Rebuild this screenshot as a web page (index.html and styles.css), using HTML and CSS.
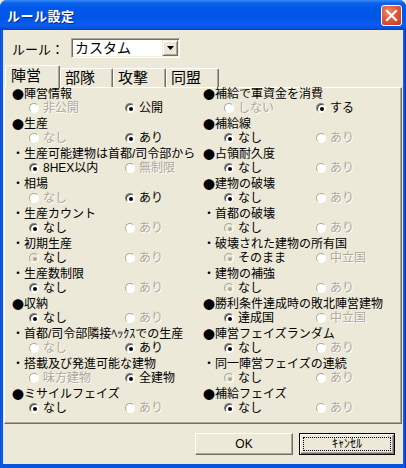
FILE: index.html
```html
<!DOCTYPE html>
<html lang="ja">
<head>
  <meta charset="UTF-8" />
  <title>ルール設定</title>
  <link rel="stylesheet" href="styles.css">
</head>
<body>
  <div class="window">
    <div class="titlebar">
      <span class="title">ルール設定</span>
      <span class="close">
        <svg width="13" height="13" viewBox="0 0 13 13"><path d="M2 2 L11 11 M11 2 L2 11" stroke="#fff" stroke-width="2.2" stroke-linecap="square"/></svg>
      </span>
    </div>

    <div class="client">
      <div class="rule-row">
        <span class="rule-label">ルール：</span>
        <div class="combo">
          <span class="combo-text">カスタム</span>
          <span class="combo-btn"><svg width="7" height="4" viewBox="0 0 7 4"><path d="M0 0 H7 L3.5 4 Z" fill="#000"/></svg></span>
        </div>
      </div>

      <div class="tabs">
        <div class="tab active">陣営</div>
        <div class="tab">部隊</div>
        <div class="tab">攻撃</div>
        <div class="tab">同盟</div>
      </div>

      <div class="panel">
        <div class="col col-left">
          <div class="group">
            <div class="head"><span class="mark">●</span>陣営情報</div>
            <div class="opts">
              <span class="opt off"><i class="rb"></i>非公開</span>
              <span class="opt"><i class="rb on"></i>公開</span>
            </div>
          </div>
          <div class="group">
            <div class="head"><span class="mark">●</span>生産</div>
            <div class="opts">
              <span class="opt off"><i class="rb"></i>なし</span>
              <span class="opt"><i class="rb on"></i>あり</span>
            </div>
          </div>
          <div class="group">
            <div class="head">・生産可能建物は首都/司令部から</div>
            <div class="opts">
              <span class="opt"><i class="rb on"></i>8HEX以内</span>
              <span class="opt off"><i class="rb"></i>無制限</span>
            </div>
          </div>
          <div class="group">
            <div class="head">・相場</div>
            <div class="opts">
              <span class="opt off"><i class="rb"></i>なし</span>
              <span class="opt"><i class="rb on"></i>あり</span>
            </div>
          </div>
          <div class="group">
            <div class="head">・生産カウント</div>
            <div class="opts">
              <span class="opt"><i class="rb on"></i>なし</span>
              <span class="opt off"><i class="rb"></i>あり</span>
            </div>
          </div>
          <div class="group">
            <div class="head">・初期生産</div>
            <div class="opts">
              <span class="opt"><i class="rb dim"></i>なし</span>
              <span class="opt off"><i class="rb"></i>あり</span>
            </div>
          </div>
          <div class="group">
            <div class="head">・生産数制限</div>
            <div class="opts">
              <span class="opt"><i class="rb on"></i>なし</span>
              <span class="opt off"><i class="rb"></i>あり</span>
            </div>
          </div>
          <div class="group">
            <div class="head"><span class="mark">●</span>収納</div>
            <div class="opts">
              <span class="opt"><i class="rb on"></i>なし</span>
              <span class="opt off"><i class="rb"></i>あり</span>
            </div>
          </div>
          <div class="group">
            <div class="head">・首都/司令部隣接ﾍｯｸｽでの生産</div>
            <div class="opts">
              <span class="opt off"><i class="rb"></i>なし</span>
              <span class="opt"><i class="rb on"></i>あり</span>
            </div>
          </div>
          <div class="group">
            <div class="head">・搭載及び発進可能な建物</div>
            <div class="opts">
              <span class="opt off"><i class="rb"></i>味方建物</span>
              <span class="opt"><i class="rb on"></i>全建物</span>
            </div>
          </div>
          <div class="group">
            <div class="head"><span class="mark">●</span>ミサイルフェイズ</div>
            <div class="opts">
              <span class="opt"><i class="rb on"></i>なし</span>
              <span class="opt off"><i class="rb"></i>あり</span>
            </div>
          </div>
        </div>

        <div class="col col-right">
          <div class="group">
            <div class="head"><span class="mark">●</span>補給で軍資金を消費</div>
            <div class="opts">
              <span class="opt off"><i class="rb"></i>しない</span>
              <span class="opt"><i class="rb on"></i>する</span>
            </div>
          </div>
          <div class="group">
            <div class="head"><span class="mark">●</span>補給線</div>
            <div class="opts">
              <span class="opt"><i class="rb on"></i>なし</span>
              <span class="opt off"><i class="rb"></i>あり</span>
            </div>
          </div>
          <div class="group">
            <div class="head"><span class="mark">●</span>占領耐久度</div>
            <div class="opts">
              <span class="opt"><i class="rb on"></i>なし</span>
              <span class="opt off"><i class="rb"></i>あり</span>
            </div>
          </div>
          <div class="group">
            <div class="head"><span class="mark">●</span>建物の破壊</div>
            <div class="opts">
              <span class="opt"><i class="rb on"></i>なし</span>
              <span class="opt off"><i class="rb"></i>あり</span>
            </div>
          </div>
          <div class="group">
            <div class="head">・首都の破壊</div>
            <div class="opts">
              <span class="opt"><i class="rb dim"></i>なし</span>
              <span class="opt off"><i class="rb"></i>あり</span>
            </div>
          </div>
          <div class="group">
            <div class="head">・破壊された建物の所有国</div>
            <div class="opts">
              <span class="opt"><i class="rb dim"></i>そのまま</span>
              <span class="opt off"><i class="rb"></i>中立国</span>
            </div>
          </div>
          <div class="group">
            <div class="head">・建物の補強</div>
            <div class="opts">
              <span class="opt"><i class="rb dim"></i>なし</span>
              <span class="opt off"><i class="rb"></i>あり</span>
            </div>
          </div>
          <div class="group">
            <div class="head"><span class="mark">●</span>勝利条件達成時の敗北陣営建物</div>
            <div class="opts">
              <span class="opt"><i class="rb on"></i>達成国</span>
              <span class="opt off"><i class="rb"></i>中立国</span>
            </div>
          </div>
          <div class="group">
            <div class="head"><span class="mark">●</span>陣営フェイズランダム</div>
            <div class="opts">
              <span class="opt"><i class="rb on"></i>なし</span>
              <span class="opt off"><i class="rb"></i>あり</span>
            </div>
          </div>
          <div class="group">
            <div class="head">・同一陣営フェイズの連続</div>
            <div class="opts">
              <span class="opt"><i class="rb dim"></i>なし</span>
              <span class="opt off"><i class="rb"></i>あり</span>
            </div>
          </div>
          <div class="group">
            <div class="head"><span class="mark">●</span>補給フェイズ</div>
            <div class="opts">
              <span class="opt"><i class="rb on"></i>なし</span>
              <span class="opt off"><i class="rb"></i>あり</span>
            </div>
          </div>
        </div>
      </div>

      <div class="buttons">
        <button class="btn">OK</button>
        <button class="btn default"><span class="focus">ｷｬﾝｾﾙ</span></button>
      </div>
    </div>
  </div>
</body>
</html>
```

FILE: styles.css
```css
* {
  box-sizing: border-box;
}
body {
  margin: 0;
  background: #ece9d8;
  font-family: "Liberation Sans", "Noto Sans CJK JP", sans-serif;
  color: #000;
}

.window {
  width: 406px;
  height: 468px;
  display: flex;
  flex-direction: column;
  background: linear-gradient(to right, #0831d9 0, #166aee 1px, #0855dd 2px, #0855dd 403px, #166aee 404px, #0831d9 405px);
  border-radius: 7px 7px 0 0;
  overflow: hidden;
}

.titlebar {
  height: 30px;
  flex: none;
  display: flex;
  align-items: center;
  justify-content: space-between;
  padding: 0 4px 0 7px;
  background: linear-gradient(#3b8cf8 0, #0a63ec 3px, #0058ea 8px, #0055e6 18px, #0a5df0 25px, #0651e0 28px, #0041cc 30px);
}
.title {
  color: #fff;
  font-weight: bold;
  font-size: 13px;
  letter-spacing: 0.5px;
  text-shadow: 1px 1px 0 #0a2a8a;
}
.close {
  width: 21px;
  height: 21px;
  display: flex;
  align-items: center;
  justify-content: center;
  border: 1px solid #fff;
  border-radius: 3px;
  background: radial-gradient(circle at 35% 30%, #f08a6c 0, #e0583a 45%, #c6391c 100%);
}

.client {
  flex: 1;
  margin: 0 3px 4px 3px;
  background: #ece9d8;
  display: flex;
  flex-direction: column;
}

.rule-row {
  display: flex;
  align-items: center;
  height: 20px;
  margin-top: 8px;
  padding-left: 9px;
}
.rule-label {
  width: 59px;
  font-size: 13px;
}
.combo {
  width: 109px;
  height: 20px;
  display: flex;
  align-items: center;
  background: #fff;
  border: 1px solid;
  border-color: #aca899 #fff #fff #aca899;
  box-shadow: inset 1px 1px 0 #716f64, inset -1px -1px 0 #f1efe2;
  padding: 1px 1px 1px 3px;
}
.combo-text {
  flex: 1;
  font-size: 14px;
  line-height: 16px;
}
.combo-btn {
  width: 16px;
  height: 16px;
  display: flex;
  align-items: center;
  justify-content: center;
  background: #ece9d8;
  border: 1px solid;
  border-color: #f1efe2 #716f64 #716f64 #f1efe2;
  box-shadow: inset 1px 1px 0 #fff, inset -1px -1px 0 #aca899;
}

.tabs {
  display: flex;
  align-items: flex-end;
  height: 22px;
  margin-top: 7px;
  padding-left: 2px;
  position: relative;
  z-index: 1;
}
.tab {
  height: 19px;
  font-size: 15px;
  line-height: 17px;
  padding: 0 17px 0 4px;
  border: 1px solid;
  border-bottom: none;
  border-color: #fff #716f64 transparent #fff;
  box-shadow: inset -1px 0 0 #aca899;
  border-radius: 2px 2px 0 0;
  background: #ece9d8;
}
.tab.active {
  height: 23px;
  margin-bottom: -1px;
  padding: 1px 18px 0 5px;
}

.panel {
  height: 337px;
  margin: 0 1px;
  border: 1px solid;
  border-color: #fff #716f64 #716f64 #fff;
  box-shadow: inset -1px -1px 0 #aca899;
  display: grid;
  grid-template-columns: 191px 1fr;
  padding-left: 7px;
  font-size: 12px;
}
.group {
  height: 30px;
}
.head {
  height: 13px;
  line-height: 13px;
  white-space: nowrap;
}
/* full-width bullet from the CJK font, kept from growing the line */
.mark {
  display: inline-block;
  width: 12px;
  height: 13px;
  line-height: 13px;
  vertical-align: top;
  font-family: "Noto Sans CJK JP", sans-serif;
}
.opts {
  height: 14px;
  display: grid;
  align-items: center;
}
.col-left .opts {
  padding-left: 17px;
  grid-template-columns: 96px auto;
}
.col-right .opts {
  padding-left: 21px;
  grid-template-columns: 92px auto;
}
.opt {
  display: flex;
  align-items: center;
  gap: 4px;
  line-height: 14px;
  white-space: nowrap;
}
.opt.off {
  color: #aca899;
  text-shadow: 1px 1px 0 #fff;
}

.rb {
  width: 10px;
  height: 10px;
  flex: none;
  position: relative;
  border-radius: 50%;
  background: #fff;
  border: 1px solid;
  border-color: #808080 #fff #fff #808080;
  box-shadow: inset 1px 1px 0 #404040;
}
.off .rb {
  border-color: #aca899 #fff #fff #aca899;
  box-shadow: none;
}
.rb.on::after,
.rb.dim::after {
  content: "";
  position: absolute;
  left: 3px;
  top: 3px;
  width: 4px;
  height: 4px;
  border-radius: 50%;
  background: #000;
}
.rb.dim {
  background: #ece9d8;
  border-color: #aca899 #fff #fff #aca899;
  box-shadow: none;
}
.rb.dim::after {
  background: #aca899;
}

.buttons {
  display: flex;
  justify-content: flex-end;
  gap: 6px;
  margin-top: 9px;
  padding-right: 8px;
}
.btn {
  height: 22px;
  width: 98px;
  padding: 0;
  font-family: "Liberation Sans", "Noto Sans CJK JP", sans-serif;
  font-size: 12px;
  color: #000;
  background: #ece9d8;
  border: 1px solid;
  border-color: #fff #716f64 #716f64 #fff;
  box-shadow: inset -1px -1px 0 #aca899;
}
.btn.default {
  width: 96px;
  border: 1px solid #000;
  box-shadow: inset 1px 1px 0 #fff, inset -1px -1px 0 #716f64, inset -2px -2px 0 #aca899;
  padding: 3px;
}
.focus {
  display: block;
  height: 100%;
  line-height: 12px;
  border: 1px dotted #000;
}
```
